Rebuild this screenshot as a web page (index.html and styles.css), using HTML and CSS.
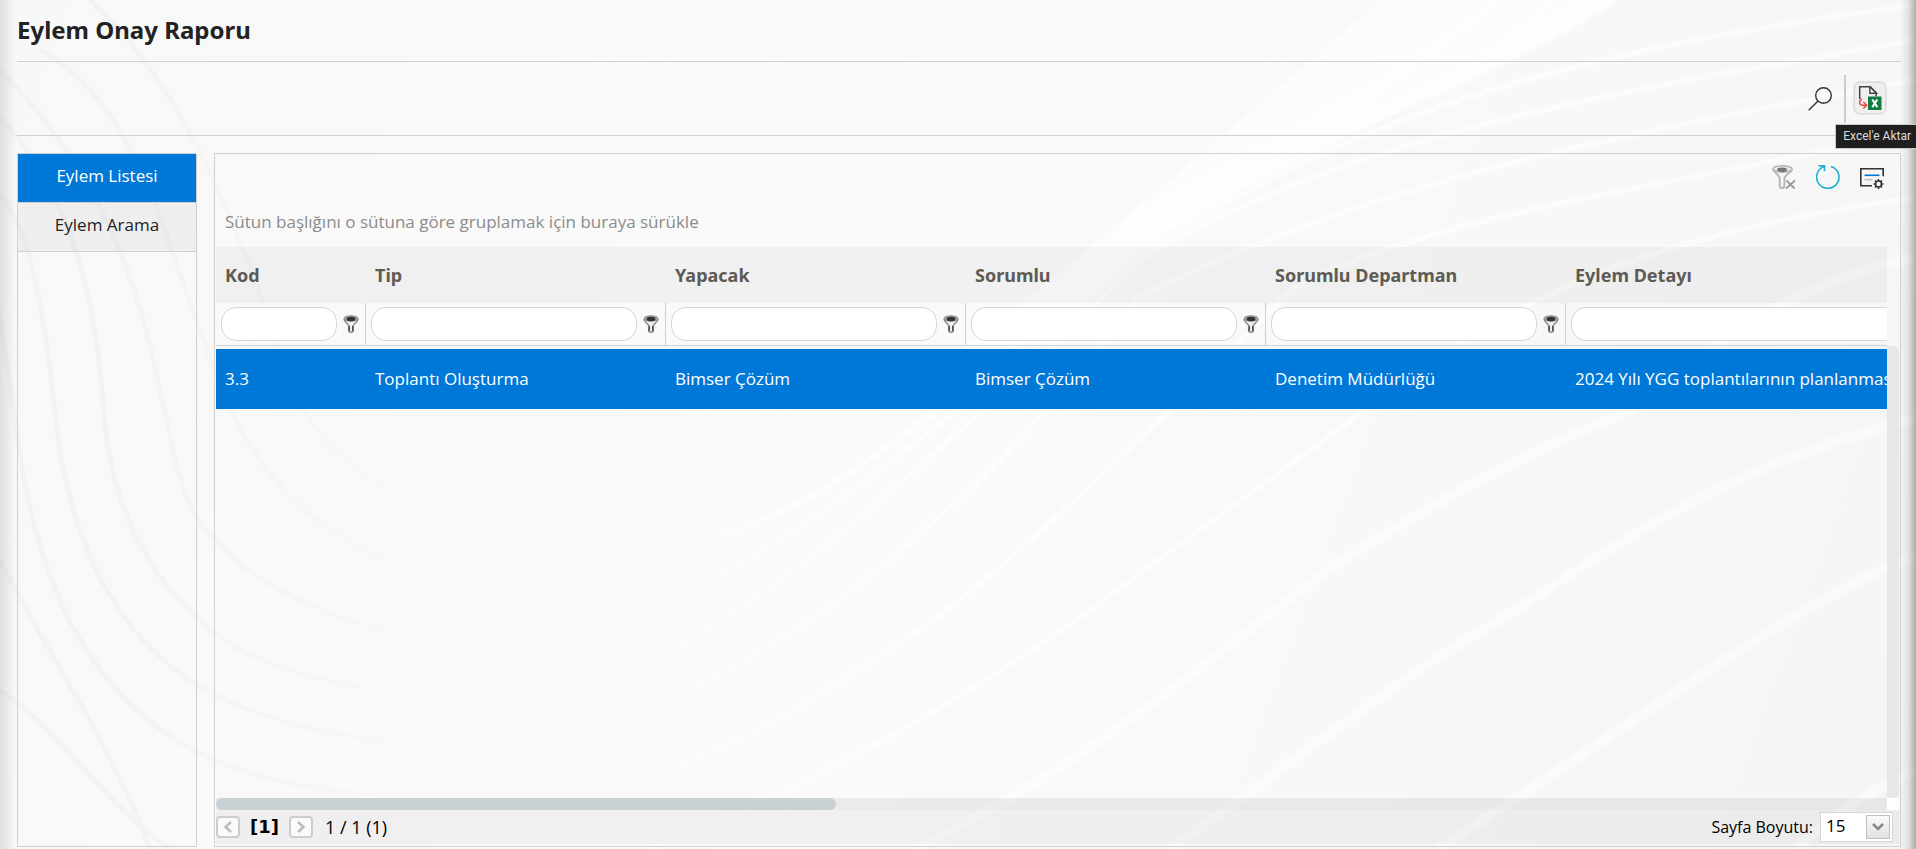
FILE: index.html
```html
<!DOCTYPE html>
<html lang="tr">
<head>
<meta charset="utf-8">
<title>Eylem Onay Raporu</title>
<link rel="stylesheet" href="styles.css">
</head>
<body>
<svg class="backdrop" viewBox="0 0 1916 849" preserveAspectRatio="none" aria-hidden="true">
  <defs>
    <linearGradient id="fade-light" gradientUnits="userSpaceOnUse" x1="450" y1="0" x2="950" y2="0"><stop offset="0" stop-color="#fff" stop-opacity="0"/><stop offset="1" stop-color="#fff"/></linearGradient>
    <linearGradient id="fade-dark" gradientUnits="userSpaceOnUse" x1="100" y1="0" x2="480" y2="0"><stop offset="0" stop-color="#f3f3f3"/><stop offset="1" stop-color="#f3f3f3" stop-opacity="0"/></linearGradient>
    <linearGradient id="glow" x1="0" y1="0" x2="1" y2="1"><stop offset="0" stop-color="#fff" stop-opacity="0"/><stop offset=".5" stop-color="#fff" stop-opacity=".7"/><stop offset="1" stop-color="#fff" stop-opacity="0"/></linearGradient>
  </defs>
  <path fill="url(#glow)" d="M1380 0H1620C1500 80 1330 130 1152 240L940 410H880C1060 280 1240 120 1380 0Z"/>
  <g class="wave-light">
    <path class="wide" d="M1916 258C1800 278 1700 350 1632 410C1530 450 1440 500 1354 553S1127 745 915 849"/>
    <path class="wide" d="M1916 418C1700 470 1570 580 1483 630S1256 790 1170 849"/>
    <path class="wide" d="M1916 555C1790 605 1640 720 1438 849"/>
    <path class="wide" d="M1916 770C1860 795 1830 820 1794 849"/>
    <path d="M1916 197C1700 230 1540 270 1365 410C1270 480 1150 565 1094 607S850 775 648 849"/>
    <path d="M1916 130C1720 180 1430 210 1292 290C1160 420 1000 580 900 643S700 780 551 793"/>
    <path d="M1916 80C1584 140 1350 190 1140 297C1050 420 900 565 790 633S600 745 467 747"/>
    <path d="M1916 40C1648 87 1350 130 1140 260C1000 400 840 540 765 590S620 697 499 697"/>
    <path d="M1916 5C1500 60 1300 140 1110 280C940 430 830 510 758 553S600 645 467 640"/>
    <path d="M1549 0C1480 90 1315 130 1152 240C960 400 850 480 778 513S650 600 551 592"/>
    <path d="M1935 410"/>
    <path d="M1500 0C1350 110 1090 290 935 410C880 450 780 550 603 545"/>
  </g>
  <g class="wave-dark">
    <path d="M551 793C420 800 290 800 194 750S40 600 19 447S-10 250 -30 240"/>
    <path d="M467 747C370 745 260 725 194 683S70 560 55 413S20 210 -10 185"/>
    <path d="M499 697C400 700 270 680 207 627S110 500 104 413S80 200 0 118"/>
    <path d="M467 640C370 640 240 590 194 513C150 430 170 240 0 70"/>
    <path d="M551 592C450 590 300 560 233 413S150 110 40 50"/>
    <path d="M603 545C500 545 350 500 305 410S220 120 90 0"/>
    <path d="M0 560C50 660 110 740 150 849M0 690C60 730 100 800 170 849"/>
  </g>
</svg>

<header class="page-head">
  <h1>Eylem Onay Raporu</h1>
</header>

<div class="actions">
  <button class="icon-btn" aria-label="Ara">
    <svg width="24" height="24" viewBox="0 0 24 24" fill="none" stroke="#333" stroke-width="1.4"><circle cx="15.5" cy="8.5" r="7.8"/><path d="M10 14 .7 23.3"/></svg>
  </button>
  <span class="divider"></span>
  <div class="tip-anchor">
    <button class="icon-btn hovered" aria-label="Excel'e Aktar" aria-describedby="tip">
      <svg width="24" height="24" viewBox="0 0 24 24" fill="none"><path d="M1.7 13V.8h10.6l5.9 5.9v3.6" stroke="#444" stroke-width="1.5"/><path d="M11.9.8v6.4h6.5z" fill="#fff" stroke="#444" stroke-width="1.5"/><rect x="10" y="10.5" width="13.5" height="13.5" fill="#107c41"/><path d="m14.3 13.5 5 7.6m0-7.6-5 7.6" stroke="#fff" stroke-width="2"/><path d="M4 13.2c-3 .6-3.4 6 .3 6h4M5.4 16l3.3 3.2-3.3 3.3" stroke="#f04646" stroke-width="1.5"/></svg>
    </button>
    <span class="tip" id="tip" role="tooltip">Excel'e Aktar</span>
  </div>
</div>

<div class="content">
  <nav class="side">
    <button class="tab active">Eylem Listesi</button>
    <button class="tab">Eylem Arama</button>
  </nav>

  <main class="panel">
    <div class="grid-tools">
      <button class="icon-btn" aria-label="Filtreyi temizle">
        <svg width="24" height="24" viewBox="0 0 24 24" fill="none"><path d="M1.2 4c0 3.500 6 5.500 6.500 9v7.500c0 3.500 4.700 3.500 4.700 0V13c.6-3.500 7.800-5.500 7.800-9" fill="#f4f4f4" stroke="#b4b4b4" stroke-width="1.800"/><ellipse cx="10.500" cy="4" rx="9.600" ry="3.200" fill="#e8e8e8" stroke="#b4b4b4" stroke-width="1.400"/><ellipse cx="10" cy="4.700" rx="5" ry="2.300" fill="#777"/><path d="m14.500 15.500 8 8m.5-8-9 8" stroke="#999" stroke-width="1.800"/></svg>
      </button>
      <button class="icon-btn" aria-label="Yenile">
        <svg width="24" height="24" viewBox="0 0 24 24" fill="none" stroke="#22b1cd" stroke-width="1.600"><path d="M15 1.400A11.200 11.200 0 1 1 7.500 1.800M2.500.9h6v5.400"/></svg>
      </button>
      <button class="icon-btn" aria-label="Sütun ayarları">
        <svg width="24" height="24" viewBox="0 0 24 24" fill="none" stroke="#333" stroke-width="1.600"><path d="M12 20.700H.8V3.800h22.400v7.400"/><path d="M4.500 10.300h15" stroke="#0078d7"/><path d="M4.500 14.700h8" stroke="#c0c0c0"/><circle cx="18.500" cy="19" r="3"/><path d="M18.500 14v2m0 6v2M13.500 19h2m6 0h2M15 15.500l1.400 1.400m4.200 4.200 1.400 1.400m0-7-1.400 1.400m-4.200 4.200L15 22.500" stroke-width="1.500"/></svg>
      </button>
    </div>
    <p class="group-hint">Sütun başlığını o sütuna göre gruplamak için buraya sürükle</p>

    <div class="grid">
      <div class="viewport">
        <table class="data">
          <colgroup><col class="c-code"><col class="c-text"><col class="c-text"><col class="c-text"><col class="c-text"><col class="c-detail"></colgroup>
          <thead>
            <tr class="titles"><th>Kod</th><th>Tip</th><th>Yapacak</th><th>Sorumlu</th><th>Sorumlu Departman</th><th>Eylem Detayı</th></tr>
            <tr class="filters">
              <td><div class="filter"><input type="text" aria-label="Kod"><button class="funnel" aria-label="Kod filtresi"><svg width="16" height="18" viewBox="0 0 16 18"><use href="#funnel"/></svg></button></div></td>
              <td><div class="filter"><input type="text" aria-label="Tip"><button class="funnel" aria-label="Tip filtresi"><svg width="16" height="18" viewBox="0 0 16 18"><use href="#funnel"/></svg></button></div></td>
              <td><div class="filter"><input type="text" aria-label="Yapacak"><button class="funnel" aria-label="Yapacak filtresi"><svg width="16" height="18" viewBox="0 0 16 18"><use href="#funnel"/></svg></button></div></td>
              <td><div class="filter"><input type="text" aria-label="Sorumlu"><button class="funnel" aria-label="Sorumlu filtresi"><svg width="16" height="18" viewBox="0 0 16 18"><use href="#funnel"/></svg></button></div></td>
              <td><div class="filter"><input type="text" aria-label="Sorumlu Departman"><button class="funnel" aria-label="Sorumlu Departman filtresi"><svg width="16" height="18" viewBox="0 0 16 18"><use href="#funnel"/></svg></button></div></td>
              <td><div class="filter"><input type="text" aria-label="Eylem Detayı"><button class="funnel" aria-label="Eylem Detayı filtresi"><svg width="16" height="18" viewBox="0 0 16 18"><use href="#funnel"/></svg></button></div></td>
            </tr>
          </thead>
          <tbody>
            <tr class="gap"><td colspan="6"></td></tr>
            <tr class="selected"><td>3.3</td><td>Toplantı Oluşturma</td><td>Bimser Çözüm</td><td>Bimser Çözüm</td><td>Denetim Müdürlüğü</td><td>2024 Yılı YGG toplantılarının planlanması</td></tr>
          </tbody>
        </table>
      </div>
      <div class="v-track"></div>
      <div class="h-track"><div class="h-thumb"></div></div>
      <div class="corner"></div>
    </div>

    <footer class="pager">
      <button class="page-btn" aria-label="Önceki"><svg width="10" height="12" viewBox="0 0 10 12" fill="none" stroke="#bbb" stroke-width="2.400"><path d="M8 1 2.500 6 8 11"/></svg></button>
      <b class="current">[1]</b>
      <button class="page-btn" aria-label="Sonraki"><svg width="10" height="12" viewBox="0 0 10 12" fill="none" stroke="#bbb" stroke-width="2.400"><path d="m2 1 5.500 5L2 11"/></svg></button>
      <span class="summary">1 / 1 (1)</span>
      <label class="size-label" for="size">Sayfa Boyutu:</label>
      <span class="size-box">
        <select id="size"><option>15</option></select>
        <span class="size-arrow"><svg width="12" height="8" viewBox="0 0 12 8" fill="none" stroke="#888" stroke-width="2.600"><path d="m1 1 5 5 5-5"/></svg></span>
      </span>
    </footer>
  </main>
</div>

<svg class="defs" width="0" height="0" aria-hidden="true"><defs><g id="funnel"><path d="M1 4c0 3 4 4.500 4.700 6.500V16c0 1.600 4.600 1.600 4.600 0v-5.500C11 8.500 15 7 15 4" fill="#eee" stroke="#8a8a8a" stroke-width="1.500"/><ellipse cx="8" cy="3.500" rx="7" ry="2.700" fill="#aaa" stroke="#8a8a8a"/><ellipse cx="8" cy="4" rx="4.500" ry="2.200" fill="#333"/><path d="M6.300 11v5m3.400-5v5" stroke="#444" stroke-width="1.200"/></g></defs></svg>
</body>
</html>
```
FILE: styles.css
```css
* { box-sizing: border-box; }
body {
  margin: 0;
  height: 100vh;
  padding: 0 15px 2px 17px;
  display: flex;
  flex-direction: column;
  overflow: hidden;
  position: relative;
  background: #f9f9f9;
  color: #222;
  font: 17px/24px "Open Sans", Tahoma, sans-serif;
}
body::after {
  content: "";
  position: absolute;
  inset: 0;
  z-index: -1;
  background:
    linear-gradient(90deg, #0000001a, #0000 16px),
    linear-gradient(270deg, #0000004d, #00000014 8px, #0000 16px);
}
.backdrop {
  position: absolute;
  inset: 0;
  width: 100%;
  height: 100%;
  z-index: -1;
  background: linear-gradient(110deg, #f8f8f8, #fafafa 50%, #f5f5f5);
}
.wave-light { fill: none; stroke: url(#fade-light); stroke-width: 6; opacity: .6; }
.wave-light .wide { stroke-width: 10; opacity: .9; }
.wave-dark { fill: none; stroke: url(#fade-dark); stroke-width: 5; }
.defs { position: absolute; }
button { margin: 0; padding: 0; border: 0; background: none; font: inherit; color: inherit; cursor: pointer; }
button svg { display: block; }

.page-head { border-bottom: 1px solid #d0d0d0; padding: 14px 0 15px; }
h1 { margin: 0; font: bold 24px/32px "Noto Sans", Tahoma, sans-serif; }

.actions {
  display: flex;
  align-items: center;
  justify-content: flex-end;
  height: 74px;
  flex: none;
  padding: 0 15px 0 0;
  border-bottom: 1px solid #d0d0d0;
}
.divider { width: 2px; height: 48px; margin: 0 8px 0 12px; background: #ccc; }
.tip-anchor { position: relative; }
.hovered { padding: 3px; border: 1px solid #ddd; border-radius: 6px; background: #f1efee; box-shadow: 0 0 0 1px #e4e4e4; }
.tip {
  position: absolute;
  top: 42px;
  right: -30px;
  z-index: 2;
  padding: 0 5px 0 7px;
  background: #1f1f1f;
  border: 1px solid #ccc;
  border-right: 0;
  color: #ddd;
  font: 12px/23px Roboto, sans-serif;
  white-space: nowrap;
}

.content { flex: 1; min-height: 0; display: flex; gap: 17px; padding-top: 17px; }
.side { flex: none; width: 180px; border: 1px solid #d0d0d0; }
.tab { display: block; width: 100%; height: 49px; padding-bottom: 4px; border-bottom: 1px solid #d0d0d0; background: #0000000a; }
.tab.active { background: #0078d7; color: #fff; }

.panel { flex: 1; min-width: 0; border: 1px solid #d0d0d0; padding: 0 1px 2px; display: flex; flex-direction: column; }
.grid-tools { display: flex; justify-content: flex-end; gap: 20px; padding: 11px 15px 0 0; }
.group-hint { margin: 0; padding: 21px 9px 13px; color: #8c8c8c; }

.grid { flex: 1; min-height: 0; display: grid; grid-template-columns: minmax(0, 1fr) 12px; grid-template-rows: minmax(0, 1fr) 12px; }
.viewport { overflow: hidden; }
.data { table-layout: fixed; border-collapse: separate; border-spacing: 0; width: 1950px; }
.c-code { width: 150px; }
.c-text { width: 300px; }
.c-detail { width: 600px; }
.data th, .data td { padding: 0 9px; text-align: left; font-weight: normal; white-space: nowrap; }
.titles th { height: 56px; background: #00000009; font: bold 18px/24px "Noto Sans", Tahoma, sans-serif; color: #5e5b55; }
.filters td { height: 43px; padding: 0 6px 0 5px; border-right: 1px solid #d0d0d0; border-bottom: 1px solid #d0d0d0; }
.filter { display: flex; align-items: center; gap: 6px; }
.filter input { flex: 1; min-width: 0; height: 34px; padding: 0 12px; border: 1px solid #d6d6d6; border-radius: 15px; background: #fff; font: inherit; }
.funnel { flex: none; }
.data .gap td { height: 3px; padding: 0; }
.selected td { height: 60px; background: #0078d7; color: #fff; }
.v-track { margin-top: 99px; background: #e7e7e7; border-radius: 0 6px 6px 0; }
.h-track { background: #0000000f; }
.h-thumb { width: 37.1%; height: 12px; border-radius: 6px; background: #cad1d5; }
.corner { background: #fff; }

.pager { flex: none; height: 34px; display: flex; align-items: center; padding-right: 6px; background: #0000000a; color: #000; }
.page-btn { width: 24px; height: 22px; display: grid; place-items: center; border: 2px solid #ccc; border-radius: 4px; background: #fafafa; }
.current { width: 49px; text-align: center; font: bold 18px/24px "DejaVu Sans", Tahoma, sans-serif; }
.summary { margin-left: 12px; font-size: 18px; }
.size-label { margin-left: auto; font-size: 16px; }
.size-box { position: relative; margin-left: 7px; }
.size-box select { display: block; width: 73px; height: 30px; padding: 0 0 3px 5px; appearance: none; border: 1px solid #d6d6d6; border-radius: 0; background: #fff; color: #000; font: inherit; }
.size-arrow { position: absolute; top: 3px; right: 3px; width: 24px; height: 24px; display: grid; place-items: center; border: 1px solid #c0c0c0; background: linear-gradient(#fafafa, #e2e2e2); pointer-events: none; }
```
